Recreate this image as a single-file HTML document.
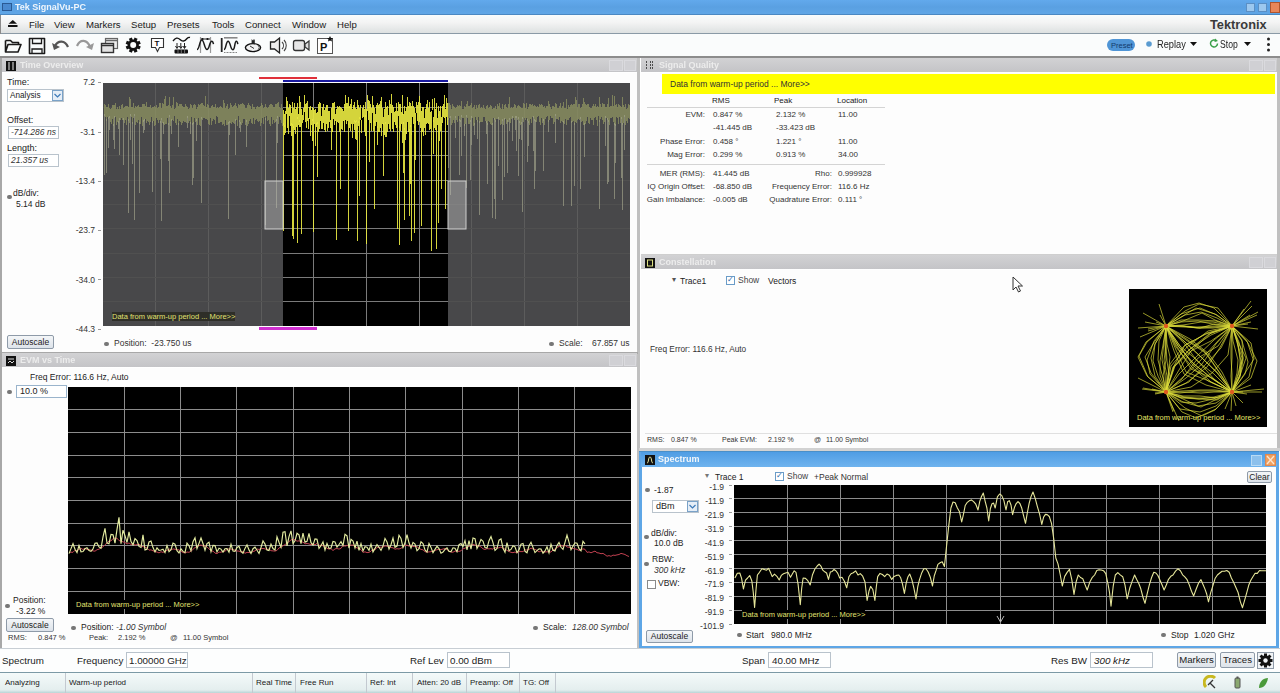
<!DOCTYPE html><html><head><meta charset="utf-8"><style>
*{margin:0;padding:0;box-sizing:border-box}
body{width:1280px;height:693px;overflow:hidden;background:#fff;font-family:"Liberation Sans", sans-serif;position:relative}
.t{position:absolute;white-space:nowrap;line-height:1.2}
.r{position:absolute}
svg{position:absolute}
</style></head><body><div class="r" style="left:0px;top:0px;width:1280px;height:15px;background:linear-gradient(#62a9ec,#5aa0e2 50%,#5fa6e6);border-bottom:1px solid #4a88c2"></div>
<div class="t" style="left:15px;top:2.1px;font-size:9px;color:#fff;font-weight:bold;opacity:.9">Tek SignalVu-PC</div>
<div class="r" style="left:2px;top:3px;width:10px;height:8px;border:1.5px solid #2a5a94;background:#4a8ad0"></div>
<div class="r" style="left:1246px;top:3px;width:9px;height:9px;background:#9cc8ef;border:1px solid #5b8fc4"></div>
<div class="r" style="left:1258px;top:3px;width:9px;height:9px;background:#9cc8ef;border:1px solid #5b8fc4"></div>
<div class="r" style="left:1270px;top:2px;width:10px;height:11px;background:#e8865a;border:1px solid #b0552e"></div>
<div class="r" style="left:0px;top:15px;width:1280px;height:19px;background:linear-gradient(#f8fcfc,#f4f4f4 40%,#dde1e1);border-bottom:1px solid #8a9aa6"></div>
<svg style="left:7px;top:19px" width="12" height="9"><path d="M1.5 4.8L5.8 1 10 4.8z" fill="#111"/><rect x="1" y="6" width="9.5" height="2" fill="#111"/></svg>
<div class="r" style="left:0px;top:15px;width:1px;height:19px;background:#8a8a8a"></div>
<div class="t" style="left:29px;top:18.7px;font-size:9.6px;color:#1a1a1a;">File</div>
<div class="t" style="left:54px;top:18.7px;font-size:9.6px;color:#1a1a1a;">View</div>
<div class="t" style="left:86px;top:18.7px;font-size:9.6px;color:#1a1a1a;">Markers</div>
<div class="t" style="left:131px;top:18.7px;font-size:9.6px;color:#1a1a1a;">Setup</div>
<div class="t" style="left:167px;top:18.7px;font-size:9.6px;color:#1a1a1a;">Presets</div>
<div class="t" style="left:212px;top:18.7px;font-size:9.6px;color:#1a1a1a;">Tools</div>
<div class="t" style="left:245px;top:18.7px;font-size:9.6px;color:#1a1a1a;">Connect</div>
<div class="t" style="left:292px;top:18.7px;font-size:9.6px;color:#1a1a1a;">Window</div>
<div class="t" style="left:337px;top:18.7px;font-size:9.6px;color:#1a1a1a;">Help</div>
<div class="t" style="left:1210px;top:17px;font-size:12.8px;font-weight:bold;color:#3a3a3a">Tektronix</div>
<div class="r" style="left:0px;top:34px;width:1280px;height:22px;background:#fafcfc"></div>
<div class="r" style="left:0px;top:56px;width:1280px;height:2px;background:#8c8c8c"></div>
<svg style="left:0;top:33px" width="1280" height="23" viewBox="0 33 1280 23"><path d="M5.5 40.5h5l2 2h6v2M5.5 40.5v11.5h12.5l3-7.5h-13l-2.5 7.5" stroke="#1a1a1a" stroke-width="1.6" fill="none" stroke-linejoin="round"/><path d="M29.5 38.5h15v15h-15z" stroke="#1a1a1a" stroke-width="1.6" fill="none" stroke-linejoin="round"/><path d="M32.5 38.5v5h9v-5M32 53v-4h10v4" stroke="#1a1a1a" stroke-width="1.3" fill="none"/><path d="M68 47c-3-7-10-7-13-1" stroke="#555" stroke-width="2.2" fill="none"/><path d="M52 43l2 7 6-3z" fill="#555"/><path d="M77 46c3-7 10-7 13 1" stroke="#999" stroke-width="2.2" fill="none"/><path d="M94 43l-2 7-6-3z" fill="#999"/><rect x="105.5" y="38.5" width="12" height="10" stroke="#666" stroke-width="1.2" fill="#eee"/><path d="M105.5 40.5h12" stroke="#666" stroke-width="1.5"/><rect x="101.5" y="43.5" width="12" height="9" stroke="#333" stroke-width="1.4" fill="#e2e2e2"/><path d="M101.5 45.5h12" stroke="#333" stroke-width="1.5"/><circle cx="133.2" cy="45.1" r="5.6" fill="#111"/><rect x="131.6" y="37.6" width="3.2" height="3.2" fill="#111" transform="rotate(22.5 133.2 45.1)"/><rect x="131.6" y="37.6" width="3.2" height="3.2" fill="#111" transform="rotate(67.5 133.2 45.1)"/><rect x="131.6" y="37.6" width="3.2" height="3.2" fill="#111" transform="rotate(112.5 133.2 45.1)"/><rect x="131.6" y="37.6" width="3.2" height="3.2" fill="#111" transform="rotate(157.5 133.2 45.1)"/><rect x="131.6" y="37.6" width="3.2" height="3.2" fill="#111" transform="rotate(202.5 133.2 45.1)"/><rect x="131.6" y="37.6" width="3.2" height="3.2" fill="#111" transform="rotate(247.5 133.2 45.1)"/><rect x="131.6" y="37.6" width="3.2" height="3.2" fill="#111" transform="rotate(292.5 133.2 45.1)"/><rect x="131.6" y="37.6" width="3.2" height="3.2" fill="#111" transform="rotate(337.5 133.2 45.1)"/><circle cx="133.2" cy="45.1" r="3" fill="#fafcfc"/><path d="M151.5 38.5h12v9h-4l-2 4-2-4h-4z" stroke="#333" stroke-width="1.1" fill="#fff"/><text x="154.6" y="46.2" font-size="8" font-weight="bold" font-family="Liberation Sans" fill="#111">T</text><path d="M173 41c2.5-3 4.5-4 7-1.5s4.5 2 7-1c1-1 2-1.3 3-1" stroke="#111" stroke-width="1.4" fill="none"/><path d="M177 43v5M180.8 43v5M184.5 43v5" stroke="#222" stroke-width="1"/><path d="M175.5 46l1.5 2.5 1.5-2.5M179.3 46l1.5 2.5 1.5-2.5M183 46l1.5 2.5 1.5-2.5" stroke="#222" stroke-width="1" fill="none"/><rect x="174.5" y="49.5" width="13.5" height="4" rx="1" fill="#111"/><path d="M178 50v3M181.3 50v3M184.6 50v3" stroke="#888" stroke-width=".8"/><path d="M200.5 37v16M210.5 37v16" stroke="#999" stroke-width="1.2"/><path d="M201 39h9" stroke="#222" stroke-width="1"/><circle cx="202.5" cy="39" r="1.1" fill="#111"/><circle cx="207.5" cy="39" r="1.1" fill="#111"/><path d="M197 49.5c2.5 0 2.5-9.5 4.8-9.5s2.8 9.5 5.2 9.5 2.5-8.3 4.7-8.3c1 0 1.5 1.5 1.8 2.9" stroke="#1a1a1a" stroke-width="1.5" fill="none"/><path d="M221.7 38v14" stroke="#222" stroke-width="1.8"/><path d="M224 37.8h13.5" stroke="#888" stroke-width="1.6"/><path d="M224 49.5c2.2 0 1.8-8.3 4.1-8.3s2.3 8.5 4.7 8.5 1.6-8.5 3.5-8.5c1 0 1.3 1.5 1.5 2.9" stroke="#1a1a1a" stroke-width="1.5" fill="none"/><path d="M224 52.5h13" stroke="#666" stroke-width=".8" stroke-dasharray="1 .5"/><ellipse cx="253" cy="47.6" rx="7.6" ry="4" stroke="#111" stroke-width="1.4" fill="#f0f0f0"/><path d="M250 46l4 2.5" stroke="#333" stroke-width="1"/><path d="M258 45.5a4 3 0 0 1 0 4" stroke="#555" stroke-width=".8" fill="none"/><path d="M251.6 43.5v-4.5l1 1.5 .6-1.5.6 1.5 1-1.5v4.5z" fill="#222"/><path d="M270.5 42h4l5-4v15l-5-4h-4z" stroke="#222" stroke-width="1.3" fill="#eee"/><path d="M282 42c2 2 2 5 0 7M284 40c3 3 3 8 0 11" stroke="#444" stroke-width="1.1" fill="none"/><rect x="293.5" y="40.5" width="11" height="10" rx="2" stroke="#333" stroke-width="1.3" fill="#e6e6e6"/><path d="M305 44l4-3v9l-4-3z" stroke="#333" stroke-width="1.2" fill="#ddd"/><rect x="317.5" y="38.5" width="15" height="15" stroke="#555" stroke-width="1" fill="#fff"/><text x="320" y="51" font-size="11" font-weight="bold" font-family="Liberation Sans" fill="#111">P</text><path d="M330 36l1 2 2 0-1.5 1.5.5 2-2-1-2 1 .5-2-1.5-1.5 2 0z" fill="#111"/><rect x="1107" y="39" width="28" height="12" rx="6" fill="#4f95d6"/><text x="1111" y="48" font-size="7.5" font-family="Liberation Sans" fill="#123a6a">Preset</text><circle cx="1149" cy="44" r="2.8" fill="#5a9bd0"/><path d="M1190 42h7l-3.5 4z" fill="#111"/><path d="M1216.5 41a3.5 3.5 0 1 0 1 2.5" stroke="#3aa04a" stroke-width="1.5" fill="none"/><path d="M1215 38.5l3 2.5-3.5 1z" fill="#3aa04a"/><path d="M1244 42h7l-3.5 4z" fill="#111"/><circle cx="1268.5" cy="39" r="1.5" fill="#222"/><circle cx="1268.5" cy="44.5" r="1.5" fill="#222"/><circle cx="1268.5" cy="50" r="1.5" fill="#222"/></svg>
<div class="t" style="left:1157px;top:38.2px;font-size:10.5px;color:#222;transform:scaleX(.88);transform-origin:0 0">Replay</div>
<div class="t" style="left:1220px;top:38.2px;font-size:10.5px;color:#222;transform:scaleX(.82);transform-origin:0 0">Stop</div>
<div class="r" style="left:0px;top:58px;width:2px;height:590px;background:#a8a8a8"></div>
<div class="r" style="left:637px;top:58px;width:3px;height:590px;background:#c0c0c0"></div>
<div class="r" style="left:1277px;top:58px;width:3px;height:392px;background:#c0c0c0"></div>
<div class="r" style="left:2px;top:58px;width:635px;height:14px;background:linear-gradient(#d2d2d4,#c4c4c7)"></div>
<div class="t" style="left:20px;top:60.1px;font-size:9px;color:#ececec;font-weight:bold;filter:blur(0.6px)">Time Overview</div>
<div class="r" style="left:609px;top:60px;width:14px;height:11px;background:#d0d0d4;border:1px solid #dadade"></div>
<div class="r" style="left:624px;top:60px;width:12px;height:11px;background:#d0d0d4;border:1px solid #dadade"></div>
<div class="r" style="left:6px;top:61px;width:10px;height:10px;background:#111"></div>
<svg style="left:6px;top:61px" width="10" height="10"><path d="M3 1v8M7 1v8" stroke="#bbb" stroke-width="1.3"/></svg>
<div class="r" style="left:2px;top:73px;width:635px;height:279px;background:#fdfdfd"></div>
<div class="r" style="left:0px;top:352px;width:638px;height:1.5px;background:#a8a8a8"></div>
<div class="r" style="left:2px;top:353px;width:635px;height:14px;background:linear-gradient(#d2d2d4,#c4c4c7)"></div>
<div class="t" style="left:20px;top:355.1px;font-size:9px;color:#ececec;font-weight:bold;filter:blur(0.6px)">EVM vs Time</div>
<div class="r" style="left:609px;top:355px;width:14px;height:11px;background:#d0d0d4;border:1px solid #dadade"></div>
<div class="r" style="left:624px;top:355px;width:12px;height:11px;background:#d0d0d4;border:1px solid #dadade"></div>
<div class="r" style="left:6px;top:356px;width:10px;height:10px;background:#111"></div>
<svg style="left:6px;top:356px" width="10" height="10"><path d="M2 3h6M2 7l2-2 2 2 2-2" stroke="#ddd" stroke-width="1"/></svg>
<div class="r" style="left:2px;top:368px;width:635px;height:277px;background:#fdfdfd"></div>
<div class="r" style="left:641px;top:58px;width:636px;height:14px;background:linear-gradient(#d2d2d4,#c4c4c7)"></div>
<div class="t" style="left:659px;top:60.1px;font-size:9px;color:#ececec;font-weight:bold;filter:blur(0.6px)">Signal Quality</div>
<div class="r" style="left:1249px;top:60px;width:14px;height:11px;background:#d0d0d4;border:1px solid #dadade"></div>
<div class="r" style="left:1264px;top:60px;width:12px;height:11px;background:#d0d0d4;border:1px solid #dadade"></div>
<svg style="left:645px;top:60px" width="10" height="11"><path d="M1 2h2M5 2h3M1 5h2M5 5h3M1 8h2M5 8h3" stroke="#222" stroke-width="1.5" stroke-dasharray="1 1"/></svg>
<div class="r" style="left:641px;top:73px;width:636px;height:181px;background:#fdfdfd"></div>
<div class="r" style="left:641px;top:254px;width:636px;height:1px;background:#cfcfcf"></div>
<div class="r" style="left:641px;top:255px;width:636px;height:14px;background:linear-gradient(#d2d2d4,#c4c4c7)"></div>
<div class="t" style="left:659px;top:257.1px;font-size:9px;color:#ececec;font-weight:bold;filter:blur(0.6px)">Constellation</div>
<div class="r" style="left:1249px;top:257px;width:14px;height:11px;background:#d0d0d4;border:1px solid #dadade"></div>
<div class="r" style="left:1264px;top:257px;width:12px;height:11px;background:#d0d0d4;border:1px solid #dadade"></div>
<div class="r" style="left:645px;top:258px;width:10px;height:10px;background:#111"></div>
<svg style="left:645px;top:258px" width="10" height="10"><rect x="2.5" y="2" width="5" height="6" stroke="#dde080" fill="none"/></svg>
<div class="r" style="left:641px;top:270px;width:636px;height:179px;background:#fdfdfd"></div>
<div class="r" style="left:639px;top:448px;width:641px;height:3px;background:#d2d2d2"></div>
<div class="r" style="left:639px;top:451px;width:640px;height:197px;background:linear-gradient(#4a8fc8 0,#4a8fc8 1px,#5ea6e6 1px)"></div>
<div class="r" style="left:641px;top:452px;width:636px;height:15px;background:linear-gradient(#4f9de4,#6fb3ee)"></div>
<div class="t" style="left:658px;top:454.1px;font-size:9px;color:#f4f8fc;font-weight:bold;filter:blur(0.3px)">Spectrum</div>
<div class="r" style="left:1251px;top:455px;width:11px;height:11px;background:#8cc0ec;border:1px solid #b8daf4"></div>
<div class="r" style="left:1265px;top:454px;width:11px;height:12px;background:#f0a060;border:1px solid #e08850"></div>
<svg style="left:1265px;top:454px" width="11" height="12"><path d="M2 2l7 8M9 2l-7 8" stroke="#fde6d0" stroke-width="1.3"/></svg>
<div class="r" style="left:645px;top:455px;width:10px;height:10px;background:#111"></div>
<svg style="left:645px;top:455px" width="10" height="10"><path d="M2 8c2 0 1-6 3-6s1 6 3 6" stroke="#e8e8a0" stroke-width="1" fill="none"/></svg>
<div class="r" style="left:642px;top:467px;width:634px;height:179px;background:#fdfdfd"></div>
<svg style="left:0;top:0" width="1280" height="693" viewBox="0 0 1280 693"><rect x="103" y="83" width="527" height="243" fill="#48484a"/><rect x="283" y="83" width="165" height="243" fill="#000"/><path d="M155.5 83V326M208.5 83V326M261.5 83V326M313.5 83V326M366.5 83V326M419.5 83V326M471.5 83V326M524.5 83V326M577.5 83V326" stroke="#5c5c5c" stroke-width="1" fill="none"/><path d="M103 107.5H630M103 131.5H630M103 155.5H630M103 180.5H630M103 204.5H630M103 228.5H630M103 253.5H630M103 277.5H630M103 301.5H630" stroke="#505050" stroke-width="1" fill="none"/><path d="M313.5 83V326M366.5 83V326M419.5 83V326M283 107.5H448M283 131.5H448M283 155.5H448M283 180.5H448M283 204.5H448M283 228.5H448M283 253.5H448M283 277.5H448M283 301.5H448" stroke="#7a7a7a" stroke-width="1"/><path d="M104.5 104V116M105.5 105V117M106.5 107V121M107.5 107V117M108.5 104V119M109.5 108V118M110.5 109V122M111.5 108V124M112.5 105V119M113.5 105V126M114.5 105V118M115.5 103V117M116.5 109V125M117.5 107V122M118.5 109V123M119.5 106V120M120.5 109V120M121.5 105V118M122.5 104V120M123.5 108V120M124.5 107V123M125.5 106V120M126.5 106V125M127.5 106V117M128.5 107V121M129.5 97V123M130.5 99V116M131.5 107V117M132.5 107V124M133.5 103V118M134.5 108V116M135.5 106V125M136.5 107V122M137.5 106V123M138.5 105V120M139.5 107V124M140.5 107V124M141.5 107V117M142.5 104V126M143.5 104V122M144.5 104V121M145.5 106V119M146.5 102V123M147.5 107V121M148.5 107V122M149.5 107V125M150.5 105V122M151.5 108V117M152.5 107V123M153.5 107V121M154.5 106V126M155.5 107V125M156.5 105V118M157.5 108V120M158.5 107V123M159.5 103V120M160.5 103V123M161.5 108V120M162.5 103V123M163.5 104V124M164.5 99V125M165.5 96V124M166.5 106V124M167.5 106V118M168.5 105V125M169.5 97V117M170.5 106V126M171.5 108V121M172.5 105V120M173.5 97V121M174.5 109V116M175.5 108V123M176.5 102V125M177.5 103V119M178.5 106V125M179.5 104V121M180.5 104V122M181.5 104V125M182.5 106V123M183.5 107V121M184.5 107V122M185.5 104V122M186.5 106V123M187.5 107V118M188.5 109V123M189.5 108V121M190.5 104V124M191.5 105V117M192.5 108V125M193.5 105V124M194.5 104V118M195.5 105V122M196.5 109V121M197.5 107V125M198.5 104V118M199.5 105V125M200.5 104V126M201.5 103V119M202.5 103V120M203.5 105V118M204.5 106V118M205.5 96V119M206.5 107V119M207.5 104V120M208.5 105V124M209.5 108V125M210.5 108V118M211.5 106V125M212.5 105V121M213.5 107V119M214.5 107V120M215.5 104V124M216.5 108V116M217.5 107V117M218.5 108V123M219.5 107V123M220.5 106V122M221.5 107V122M222.5 108V125M223.5 100V124M224.5 103V126M225.5 108V120M226.5 106V125M227.5 104V125M228.5 109V124M229.5 108V123M230.5 103V123M231.5 105V124M232.5 107V122M233.5 106V123M234.5 105V124M235.5 103V121M236.5 106V120M237.5 108V126M238.5 104V116M239.5 105V122M240.5 104V124M241.5 104V125M242.5 103V123M243.5 104V119M244.5 105V119M245.5 108V125M246.5 108V122M247.5 105V126M248.5 103V124M249.5 105V121M250.5 106V119M251.5 109V123M252.5 104V124M253.5 107V118M254.5 107V124M255.5 109V120M256.5 107V119M257.5 106V121M258.5 107V122M259.5 107V121M260.5 106V126M261.5 103V123M262.5 105V118M263.5 108V124M264.5 107V117M265.5 104V120M266.5 107V116M267.5 108V121M268.5 107V120M269.5 105V124M270.5 104V126M271.5 104V117M272.5 105V124M273.5 107V120M274.5 107V123M275.5 104V122M276.5 104V121M277.5 103V118M278.5 102V124M279.5 107V117M280.5 108V120M281.5 104V123M282.5 108V126M448.5 103V120M449.5 103V118M450.5 105V118M451.5 109V125M452.5 104V123M453.5 106V120M454.5 107V123M455.5 108V118M456.5 107V120M457.5 105V122M458.5 106V116M459.5 105V121M460.5 106V122M461.5 101V117M462.5 109V118M463.5 109V118M464.5 106V126M465.5 107V124M466.5 104V117M467.5 101V118M468.5 106V124M469.5 106V124M470.5 105V122M471.5 103V118M472.5 108V118M473.5 107V126M474.5 105V125M475.5 109V117M476.5 105V120M477.5 108V122M478.5 105V117M479.5 104V123M480.5 108V122M481.5 107V122M482.5 108V122M483.5 105V117M484.5 108V117M485.5 109V121M486.5 106V123M487.5 105V125M488.5 108V121M489.5 107V122M490.5 105V124M491.5 106V125M492.5 109V125M493.5 108V118M494.5 108V120M495.5 106V122M496.5 109V119M497.5 104V119M498.5 106V119M499.5 103V120M500.5 108V125M501.5 109V124M502.5 104V121M503.5 109V125M504.5 105V120M505.5 104V119M506.5 107V124M507.5 108V122M508.5 104V122M509.5 97V120M510.5 108V123M511.5 107V119M512.5 108V118M513.5 107V118M514.5 104V120M515.5 105V118M516.5 108V118M517.5 106V120M518.5 105V119M519.5 106V123M520.5 107V125M521.5 108V124M522.5 108V119M523.5 103V122M524.5 104V118M525.5 108V120M526.5 103V118M527.5 109V121M528.5 107V123M529.5 104V125M530.5 104V119M531.5 105V123M532.5 104V117M533.5 106V118M534.5 105V121M535.5 106V122M536.5 107V122M537.5 106V117M538.5 107V116M539.5 104V122M540.5 105V125M541.5 104V118M542.5 105V123M543.5 107V121M544.5 106V125M545.5 108V119M546.5 106V117M547.5 106V116M548.5 101V122M549.5 104V120M550.5 107V116M551.5 109V118M552.5 106V118M553.5 106V124M554.5 107V122M555.5 103V116M556.5 104V119M557.5 108V119M558.5 108V120M559.5 106V117M560.5 103V123M561.5 108V121M562.5 106V122M563.5 102V123M564.5 108V124M565.5 108V119M566.5 99V125M567.5 109V120M568.5 105V120M569.5 107V118M570.5 105V117M571.5 104V123M572.5 105V122M573.5 104V121M574.5 104V125M575.5 97V122M576.5 100V123M577.5 107V120M578.5 104V119M579.5 104V120M580.5 108V119M581.5 107V122M582.5 104V121M583.5 98V125M584.5 102V125M585.5 104V124M586.5 105V121M587.5 104V117M588.5 104V123M589.5 107V124M590.5 108V118M591.5 108V120M592.5 106V120M593.5 104V125M594.5 106V118M595.5 104V117M596.5 107V120M597.5 106V126M598.5 107V116M599.5 97V122M600.5 104V119M601.5 107V117M602.5 103V120M603.5 104V124M604.5 104V122M605.5 107V118M606.5 107V118M607.5 104V120M608.5 98V122M609.5 107V125M610.5 106V118M611.5 106V118M612.5 95V117M613.5 106V122M614.5 96V125M615.5 105V126M616.5 104V117M617.5 107V118M618.5 104V124M619.5 105V117M620.5 106V123M621.5 107V119M622.5 97V125M623.5 105V123M624.5 107V117M625.5 104V125M626.5 109V121M627.5 108V123M628.5 104V118M629.5 105V119" stroke="#8f9462" stroke-width="1" fill="none" opacity=".75"/><path d="M104.5 114V175M106.5 119V173M108.5 117V148M109.5 116V130M113.5 124V140M114.5 116V149M118.5 121V129M119.5 118V155M123.5 118V165M128.5 119V213M130.5 114V140M132.5 122V164M134.5 114V220M139.5 122V193M143.5 120V133M144.5 119V130M152.5 121V192M160.5 121V159M161.5 118V221M163.5 122V134M168.5 123V161M169.5 115V193M171.5 119V134M178.5 123V147M187.5 116V128M190.5 122V134M192.5 123V185M193.5 122V178M196.5 119V141M201.5 117V203M228.5 122V219M229.5 121V135M235.5 119V155M239.5 120V128M240.5 122V132M246.5 120V147M265.5 118V225M276.5 119V208M277.5 116V143M448.5 118V168M450.5 116V195M455.5 116V138M459.5 119V175M460.5 120V127M461.5 115V156M464.5 124V136M466.5 115V188M470.5 120V180M471.5 116V145M474.5 123V135M477.5 120V139M479.5 121V215M486.5 121V134M487.5 123V184M492.5 123V218M494.5 118V199M495.5 120V219M498.5 117V166M502.5 119V200M504.5 118V177M507.5 120V173M509.5 118V131M512.5 116V141M515.5 116V130M516.5 116V151M518.5 117V176M519.5 121V139M521.5 122V140M522.5 117V212M527.5 119V162M528.5 121V146M533.5 116V151M534.5 119V189M535.5 120V171M543.5 119V171M548.5 120V132M555.5 114V143M563.5 121V206M571.5 121V206M574.5 123V186M580.5 117V189M584.5 123V157M599.5 120V209M605.5 116V146M607.5 118V184M608.5 120V182M614.5 123V199M615.5 124V163M621.5 117V178M622.5 123V210M624.5 115V150" stroke="#a4a68c" stroke-width="1" fill="none" opacity=".65"/><path d="M283.5 110V125M283.5 123V231M284.5 114V127M284.5 125V135M285.5 111V133M286.5 97V114M287.5 101V128M288.5 108V134M289.5 104V116M290.5 105V126M291.5 113V125M291.5 123V136M292.5 102V126M292.5 124V236M293.5 108V128M293.5 126V239M294.5 103V130M295.5 109V134M296.5 107V127M297.5 103V119M297.5 117V243M298.5 114V125M299.5 96V122M299.5 120V127M300.5 102V127M301.5 109V125M301.5 123V234M302.5 115V123M303.5 108V120M304.5 95V112M305.5 104V122M306.5 103V128M306.5 126V127M307.5 101V121M308.5 118V129M309.5 107V119M310.5 106V136M311.5 110V125M312.5 107V121M312.5 119V141M313.5 108V129M313.5 127V232M314.5 110V124M315.5 109V132M315.5 130V146M316.5 113V125M316.5 123V127M317.5 112V124M317.5 122V177M318.5 104V132M319.5 102V129M320.5 103V121M321.5 116V129M322.5 107V129M323.5 104V123M324.5 110V130M325.5 108V132M326.5 105V124M327.5 105V131M328.5 111V128M329.5 111V122M330.5 120V128M330.5 126V126M331.5 108V129M331.5 127V150M332.5 103V132M332.5 130V132M333.5 103V119M334.5 102V125M335.5 114V121M336.5 109V124M336.5 122V240M337.5 106V122M338.5 107V123M339.5 106V132M340.5 107V135M340.5 133V189M341.5 108V129M342.5 109V130M343.5 111V121M344.5 104V132M345.5 95V120M346.5 103V124M347.5 103V121M348.5 97V125M348.5 123V231M349.5 106V128M350.5 104V131M351.5 99V124M352.5 109V138M353.5 105V124M354.5 102V122M354.5 120V130M355.5 108V123M355.5 121V139M356.5 109V122M356.5 120V140M357.5 100V129M357.5 127V241M358.5 105V123M358.5 121V126M359.5 108V119M359.5 117V196M360.5 105V120M361.5 120V133M362.5 108V118M363.5 105V117M364.5 109V132M365.5 102V117M365.5 115V136M366.5 109V122M366.5 120V244M367.5 95V111M368.5 100V120M369.5 101V113M369.5 111V162M370.5 104V123M371.5 108V131M372.5 96V113M373.5 105V131M373.5 129V128M374.5 108V123M374.5 121V209M375.5 114V126M376.5 105V122M377.5 103V128M377.5 126V145M378.5 105V132M379.5 104V132M380.5 101V128M381.5 97V107M381.5 105V136M382.5 108V124M383.5 117V125M383.5 123V176M384.5 109V135M385.5 102V124M385.5 122V137M386.5 107V137M387.5 106V132M388.5 115V124M389.5 100V129M390.5 104V131M391.5 94V113M392.5 105V129M393.5 107V132M394.5 112V122M395.5 111V125M396.5 103V128M397.5 111V127M397.5 125V229M398.5 102V116M399.5 104V128M399.5 126V245M400.5 104V126M400.5 124V131M401.5 112V124M402.5 95V115M402.5 113V143M403.5 114V124M403.5 122V173M404.5 106V130M404.5 128V220M405.5 111V140M406.5 107V134M406.5 132V134M407.5 97V122M408.5 106V132M409.5 102V131M409.5 129V216M410.5 103V127M410.5 125V184M411.5 106V135M411.5 133V241M412.5 101V117M413.5 106V124M414.5 108V128M414.5 126V233M415.5 113V123M415.5 121V160M416.5 102V113M417.5 105V121M418.5 102V125M419.5 96V122M420.5 103V128M421.5 111V132M421.5 130V226M422.5 107V132M423.5 107V136M424.5 118V128M425.5 109V135M426.5 104V124M427.5 100V123M428.5 108V124M429.5 102V130M430.5 112V129M431.5 111V140M431.5 138V251M432.5 99V110M433.5 117V122M433.5 120V154M434.5 98V128M435.5 109V130M436.5 103V130M436.5 128V249M437.5 118V125M438.5 106V116M438.5 114V223M439.5 111V141M440.5 106V131M441.5 117V126M441.5 124V189M442.5 106V123M443.5 104V117M444.5 95V118M445.5 109V130M445.5 128V209M446.5 98V117M447.5 103V125" stroke="#e6e640" stroke-width="1" fill="none" opacity=".92"/><rect x="265" y="181" width="18" height="48" fill="#bdbdbd" fill-opacity=".45" stroke="#cfcfcf" stroke-width="1"/><rect x="448" y="181" width="18" height="48" fill="#bdbdbd" fill-opacity=".45" stroke="#cfcfcf" stroke-width="1"/><rect x="259" y="77" width="58" height="2" fill="#e0303a"/><rect x="283" y="80" width="165" height="2" fill="#1a1aa0"/><rect x="259" y="327" width="58" height="3" fill="#d030d0"/><rect x="68" y="387" width="563" height="227" fill="#000"/><path d="M124.5 387V614M180.5 387V614M236.5 387V614M293.5 387V614M349.5 387V614M405.5 387V614M462.5 387V614M518.5 387V614M574.5 387V614M68 409.5H631M68 432.5H631M68 455.5H631M68 477.5H631M68 500.5H631M68 523.5H631M68 545.5H631M68 568.5H631M68 591.5H631" stroke="#8c8c8c" stroke-width="1" fill="none"/><polyline points="69,552.5 71,552.2 73,552.3 75,550.2 77,550.8 79,549.3 81,548.3 83,549.5 85,548.1 87,549.6 89,549.5 91,550.2 93,550.9 95,551.2 97,549.7 99,549.2 101,547.8 103,546.9 105,544.7 107,543.1 109,541.0 111,541.0 113,538.5 115,538.1 117,538.2 119,540.6 121,541.0 123,541.9 125,542.5 127,544.0 129,542.9 131,544.5 133,543.7 135,545.1 137,544.6 139,544.1 141,545.8 143,546.6 145,547.2 147,548.2 149,550.2 151,549.8 153,550.8 155,551.6 157,552.0 159,552.9 161,551.7 163,552.4 165,551.3 167,550.4 169,548.9 171,549.9 173,548.9 175,549.3 177,549.8 179,549.8 181,551.3 183,552.5 185,553.0 187,552.0 189,552.3 191,551.2 193,549.4 195,547.5 197,546.6 199,545.6 201,545.0 203,546.1 205,545.8 207,546.9 209,548.9 211,550.9 213,551.1 215,553.1 217,553.7 219,552.0 221,552.3 223,551.2 225,551.2 227,549.5 229,548.8 231,549.1 233,549.6 235,550.2 237,551.0 239,551.1 241,552.1 243,551.5 245,553.3 247,552.4 249,552.5 251,552.9 253,551.5 255,550.9 257,549.0 259,549.4 261,548.8 263,548.4 265,548.9 267,549.7 269,549.0 271,550.7 273,550.9 275,551.1 277,550.4 279,547.9 281,547.4 283,545.7 285,544.6 287,543.1 289,541.6 291,539.9 293,539.3 295,539.8 297,541.2 299,540.8 301,541.7 303,542.1 305,543.8 307,543.5 309,543.9 311,544.8 313,543.6 315,544.8 317,543.4 319,545.4 321,545.2 323,545.7 325,546.7 327,548.3 329,549.1 331,548.7 333,550.5 335,548.9 337,548.5 339,549.1 341,548.4 343,545.4 345,546.2 347,545.5 349,545.7 351,545.1 353,545.1 355,546.8 357,547.9 359,548.6 361,549.6 363,552.4 365,551.8 367,552.6 369,552.4 371,551.2 373,549.2 375,549.9 377,547.4 379,547.3 381,547.2 383,547.1 385,545.9 387,546.2 389,546.3 391,547.5 393,547.8 395,549.2 397,548.7 399,549.0 401,548.3 403,546.7 405,545.5 407,545.1 409,546.2 411,544.9 413,546.6 415,546.3 417,546.6 419,548.2 421,549.4 423,549.8 425,551.7 427,552.1 429,551.9 431,551.7 433,551.0 435,550.4 437,549.7 439,549.4 441,549.6 443,549.0 445,548.5 447,549.6 449,550.9 451,552.1 453,552.2 455,551.1 457,551.0 459,551.4 461,550.8 463,548.8 465,548.2 467,547.2 469,546.3 471,545.4 473,544.4 475,545.1 477,545.9 479,546.0 481,546.9 483,548.8 485,549.5 487,548.6 489,548.9 491,548.7 493,549.2 495,547.2 497,548.2 499,547.8 501,547.0 503,548.3 505,549.1 507,550.4 509,551.5 511,552.3 513,552.7 515,552.0 517,553.0 519,551.6 521,551.6 523,551.6 525,549.8 527,550.1 529,549.4 531,548.1 533,549.0 535,549.4 537,550.4 539,552.0 541,550.9 543,551.6 545,552.0 547,551.8 549,551.8 551,552.1 553,549.9 555,549.1 557,547.6 559,546.4 561,545.3 563,546.4 565,545.2 567,547.0 569,547.2 571,547.8 573,548.5 575,548.9 577,549.4 579,550.5 581,549.5 583,548.9 585,549.3 587,552.4 589,551.9 591,552.8 593,551.9 595,551.1 597,552.7 599,553.0 601,553.7 603,553.4 605,554.7 607,556.2 609,555.6 611,556.3 613,555.1 615,555.4 617,554.9 619,554.5 621,553.4 623,553.9 625,554.5 627,555.7 629,556.5" stroke="#c04050" stroke-width="1" fill="none"/><polyline points="69,553.6 71,548.6 73,543.7 75,549.3 77,552.6 79,545.6 81,551.8 83,551.5 85,548.8 87,547.7 89,550.5 91,551.3 93,549.0 95,543.2 97,542.9 99,546.9 101,548.3 103,536.9 105,528.3 107,543.0 109,543.7 111,534.4 113,534.8 115,543.2 117,529.3 119,517.3 121,543.7 123,530.2 125,535.7 127,542.5 129,531.8 131,541.6 133,544.8 135,538.6 137,540.6 139,546.4 141,547.4 143,534.8 145,549.9 147,549.2 149,542.0 151,541.0 153,547.6 155,552.0 157,547.8 159,550.4 161,550.0 163,549.2 165,552.6 167,545.4 169,551.6 171,549.6 173,543.0 175,544.2 177,550.6 179,552.9 181,548.9 183,551.4 185,552.5 187,543.1 189,545.7 191,550.7 193,541.7 195,537.8 197,548.7 199,543.4 201,538.0 203,543.5 205,550.2 207,543.5 209,542.2 211,551.8 213,545.4 215,545.6 217,551.9 219,548.2 221,549.1 223,552.1 225,548.7 227,548.6 229,552.1 231,544.1 233,551.0 235,551.3 237,547.4 239,546.3 241,551.4 243,553.3 245,548.4 247,544.8 249,549.9 251,553.4 253,548.7 255,547.2 257,550.3 259,553.5 261,547.5 263,540.8 265,544.1 267,550.0 269,550.5 271,544.2 273,548.5 275,549.9 277,536.9 279,542.3 281,547.3 283,532.3 285,531.7 287,545.8 289,536.6 291,530.9 293,543.6 295,540.8 297,533.3 299,534.8 301,543.6 303,533.0 305,542.1 307,541.3 309,533.4 311,542.7 313,545.1 315,538.9 317,539.3 319,548.4 321,545.7 323,541.8 325,550.1 327,543.4 329,548.4 331,548.0 333,541.5 335,541.9 337,547.1 339,544.5 341,541.7 343,545.5 345,534.2 347,535.8 349,548.2 351,539.4 353,541.1 355,548.0 357,541.2 359,550.3 361,543.5 363,550.9 365,546.7 367,547.2 369,550.3 371,544.0 373,551.9 375,548.4 377,544.6 379,547.3 381,550.4 383,545.9 385,538.4 387,542.0 389,549.1 391,544.7 393,538.1 395,547.3 397,546.1 399,535.2 401,538.4 403,547.5 405,543.1 407,534.6 409,542.8 411,548.1 413,542.4 415,544.0 417,550.6 419,548.6 421,541.7 423,543.5 425,549.9 427,552.1 429,543.4 431,547.4 433,552.6 435,549.4 437,546.3 439,548.6 441,553.2 443,552.1 445,549.4 447,547.9 449,551.5 451,551.6 453,547.8 455,548.3 457,551.7 459,544.7 461,543.6 463,546.5 465,540.6 467,550.0 469,540.6 471,549.2 473,538.0 475,538.6 477,548.4 479,544.4 481,539.4 483,541.2 485,547.6 487,548.1 489,540.7 491,536.5 493,542.6 495,550.3 497,548.4 499,540.2 501,539.0 503,548.2 505,552.3 507,542.7 509,550.6 511,549.4 513,545.7 515,546.8 517,552.6 519,549.9 521,544.1 523,543.4 525,551.3 527,552.7 529,545.8 531,542.3 533,547.4 535,552.6 537,550.7 539,548.8 541,549.1 543,553.2 545,550.9 547,546.7 549,552.8 551,544.2 553,550.2 555,550.9 557,545.6 559,542.4 561,547.3 563,549.3 565,542.4 567,535.1 569,542.2 571,549.8 573,546.1 575,542.8 577,543.2 579,548.7 581,550.9 583,541.3 585,543.8" stroke="#e4eca0" stroke-width="1.15" fill="none"/><rect x="734" y="485" width="532" height="139" fill="#000"/><path d="M787.5 485V624M840.5 485V624M893.5 485V624M946.5 485V624M1000.5 485V624M1053.5 485V624M1106.5 485V624M1159.5 485V624M1212.5 485V624M734 498.5H1266M734 512.5H1266M734 526.5H1266M734 540.5H1266M734 554.5H1266M734 568.5H1266M734 582.5H1266M734 596.5H1266M734 610.5H1266" stroke="#8c8c8c" stroke-width="1" fill="none"/><polyline points="734.9,578.0 737.3,573.3 739.8,573.0 741.6,578.4 743.4,589.0 745.5,580.2 747.6,578.0 749.7,575.5 751.8,580.8 753.2,591.7 754.6,607.5 756.0,589.7 757.4,575.0 759.5,572.3 761.9,568.8 764.2,569.4 766.6,570.2 768.5,568.3 770.3,572.0 772.2,576.6 774.5,574.2 776.9,576.3 779.2,580.0 781.3,575.4 783.5,573.8 785.6,573.0 788.0,572.2 790.5,577.3 792.3,574.1 794.2,570.8 796.0,572.3 798.1,584.4 800.3,604.7 801.7,588.2 803.1,578.0 805.5,578.4 807.8,580.7 810.2,585.0 812.5,574.7 814.9,569.0 817.2,566.0 819.1,564.1 820.9,566.1 822.8,570.2 824.7,571.8 826.6,573.0 828.5,579.4 830.3,572.1 832.2,571.4 834.0,569.5 835.9,570.8 837.8,573.4 839.7,578.0 842.0,577.3 844.4,581.2 846.7,587.8 848.9,576.8 851.0,573.8 853.3,572.8 855.7,570.9 858.0,575.0 860.3,573.6 862.7,576.2 865.0,582.0 867.1,600.5 868.9,591.3 870.6,586.4 872.8,589.5 874.9,600.5 876.3,587.0 877.7,576.6 880.0,573.4 882.4,574.5 884.7,576.6 887.0,574.0 889.4,575.2 891.7,579.4 894.1,576.4 896.4,575.4 898.8,575.0 900.7,577.8 902.5,584.2 904.4,593.4 906.2,583.0 907.9,577.0 909.7,574.0 911.8,579.4 913.9,588.1 916.0,599.0 917.8,586.5 919.5,579.6 921.7,572.9 923.8,568.7 926.0,568.7 928.2,572.0 930.3,577.2 932.5,586.0 934.3,575.7 936.1,570.4 937.9,564.4 940.1,562.8 942.2,561.8 944.4,566.6 946.6,545.8 948.7,526.3 950.9,508.0 953.0,502.0 955.2,502.7 957.4,508.0 959.5,511.8 961.7,522.0 963.5,514.2 965.2,505.5 967.0,502.7 969.2,500.8 971.4,499.9 973.6,501.6 975.8,504.2 978.0,510.0 979.8,501.1 981.5,496.5 983.3,493.0 985.1,501.1 986.9,508.0 988.7,521.0 990.4,508.5 992.0,503.8 993.6,503.1 995.2,508.0 997.4,496.9 999.6,494.0 1001.7,495.4 1003.9,500.6 1006.0,510.0 1007.6,501.8 1009.3,500.6 1011.0,505.0 1012.6,514.6 1014.4,507.6 1016.2,503.6 1018.0,501.6 1019.9,503.5 1021.8,508.3 1023.6,515.9 1025.5,523.3 1027.4,512.3 1029.2,503.2 1031.1,496.4 1033.0,492.0 1035.2,498.4 1037.4,506.6 1039.6,514.2 1041.8,524.4 1043.6,517.1 1045.4,514.4 1047.2,514.6 1049.3,516.5 1051.5,523.3 1053.7,538.5 1055.8,558.0 1058.0,563.9 1060.1,574.0 1062.3,586.0 1064.7,576.4 1067.1,572.4 1069.5,569.3 1071.8,579.6 1074.0,594.4 1076.2,581.7 1078.3,575.0 1080.5,577.5 1082.8,578.7 1085.0,584.6 1087.2,590.0 1089.7,582.3 1092.1,577.7 1094.6,575.0 1096.8,570.5 1099.0,569.7 1101.3,570.0 1103.5,570.7 1105.8,573.6 1108.0,584.0 1109.5,592.3 1111.0,606.2 1113.2,586.2 1115.3,575.0 1117.8,572.7 1120.2,574.9 1122.7,576.7 1125.0,585.2 1127.2,598.8 1129.7,588.3 1132.1,581.4 1134.6,575.0 1136.7,579.5 1138.8,583.5 1140.8,588.8 1142.9,597.0 1145.0,603.3 1147.2,593.6 1149.4,584.7 1151.6,577.5 1153.8,572.2 1155.9,573.0 1157.9,575.5 1160.0,580.3 1162.0,584.8 1164.1,590.0 1166.3,585.0 1168.5,579.3 1170.8,576.3 1173.0,575.0 1175.5,571.1 1177.9,568.8 1180.4,570.7 1182.6,574.8 1184.8,576.9 1187.1,579.7 1189.3,584.9 1191.5,591.2 1193.7,595.9 1196.1,589.2 1198.6,583.0 1201.0,579.6 1202.9,584.2 1204.8,588.6 1206.6,593.7 1208.5,601.8 1210.7,592.7 1213.0,585.3 1215.2,578.2 1217.4,575.0 1219.8,573.0 1222.1,571.2 1224.5,571.3 1226.8,570.5 1229.2,572.2 1231.4,578.0 1233.6,582.2 1235.8,587.2 1238.1,592.5 1240.3,601.6 1242.5,607.7 1244.6,600.3 1246.7,592.8 1248.7,585.3 1250.8,580.2 1252.9,576.7 1255.1,573.3 1257.3,573.4 1259.5,570.5 1261.6,570.7 1263.8,570.8 1266,570.7" stroke="#e6e69a" stroke-width="1.1" fill="none" stroke-linejoin="round"/><rect x="1129" y="289" width="138" height="138" fill="#000"/><path d="M1232 326L1208 331L1187 347L1171 366L1166 392M1166 326L1180 346L1198 361L1214 379L1232 392M1232 326L1216 344L1202 364L1186 378L1166 392M1166 326L1180 346L1192 364L1211 382L1232 392M1232 326L1221 348L1206 364L1189 382L1166 392M1166 326L1190 339L1208 353L1222 372L1232 392M1232 326L1209 334L1189 350L1175 366L1166 392M1166 326L1186 343L1203 359L1218 374L1232 392M1232 326L1211 333L1192 350L1174 367L1166 392M1166 326L1185 338L1204 351L1219 372L1232 392M1232 326L1207 333L1184 346L1170 364L1166 392M1166 326L1184 343L1197 361L1214 374L1232 392M1232 326L1215 344L1200 361L1183 377L1166 392M1166 326L1179 347L1194 364L1211 378L1232 392M1232 326L1206 334L1185 345L1174 366L1166 392M1166 326L1184 341L1201 357L1217 372L1232 392M1232 326L1214 340L1196 357L1179 374L1166 392M1166 326L1174 351L1184 374L1206 385L1232 392M1232 326L1211 341L1191 351L1179 370L1166 392M1166 326L1176 345L1191 369L1212 378L1232 392M1232 326L1228 355L1212 373L1191 387L1166 392M1166 326L1186 340L1207 354L1220 373L1232 392M1232 326L1218 346L1198 358L1182 379L1166 392M1166 326L1178 346L1194 364L1213 379L1232 392M1232 326L1219 349L1207 367L1186 383L1166 392M1166 326L1176 350L1186 372L1209 381L1232 392M1232 326L1211 335L1190 349L1173 367L1166 392M1166 326L1176 347L1192 367L1208 381L1232 392M1166 326L1183 326L1197 328L1213 328L1232 326M1166 326L1181 326L1200 328L1214 324L1232 326M1166 326L1181 320L1199 320L1216 321L1232 326M1166 326L1184 327L1200 328L1214 327L1232 326M1166 326L1181 322L1198 321L1217 325L1232 326M1166 326L1183 325L1201 322L1213 322L1232 326M1166 326L1183 326L1197 327L1215 326L1232 326M1166 326L1184 307L1199 303L1214 308L1232 326M1166 326L1185 311L1199 304L1218 308L1232 326M1166 326L1183 321L1202 313L1215 320L1232 326M1166 326L1181 314L1200 308L1217 315L1232 326M1166 326L1181 317L1196 308L1215 314L1232 326M1166 326L1185 315L1201 312L1217 318L1232 326M1166 392L1180 393L1197 391L1213 391L1232 392M1166 392L1184 397L1197 398L1215 398L1232 392M1166 392L1182 398L1199 399L1214 397L1232 392M1166 392L1183 392L1201 393L1214 392L1232 392M1166 392L1180 397L1199 399L1217 400L1232 392M1166 392L1182 391L1200 390L1215 390L1232 392M1166 392L1183 396L1200 396L1218 398L1232 392M1166 392L1183 402L1201 407L1215 400L1232 392M1166 392L1183 399L1198 406L1216 403L1232 392M1166 392L1181 402L1196 403L1213 399L1232 392M1166 392L1182 412L1196 418L1216 409L1232 392M1166 392L1180 409L1200 412L1216 406L1232 392M1166 392L1185 408L1202 416L1215 410L1232 392M1166 326L1163 345L1160 361L1160 375L1166 392M1166 326L1166 345L1167 361L1169 375L1166 392M1166 326L1164 342L1162 360L1165 374L1166 392M1166 326L1166 344L1164 361L1167 376L1166 392M1166 326L1167 344L1170 357L1168 375L1166 392M1166 326L1159 341L1158 360L1163 378L1166 392M1166 326L1165 345L1166 360L1163 376L1166 392M1166 326L1154 341L1147 360L1150 374L1166 392M1166 326L1147 342L1139 356L1148 377L1166 392M1166 326L1155 344L1151 358L1155 376L1166 392M1166 326L1146 342L1138 357L1147 376L1166 392M1166 326L1153 344L1145 357L1151 373L1166 392M1166 326L1155 344L1153 361L1158 376L1166 392M1232 326L1239 342L1243 358L1238 376L1232 392M1232 326L1233 341L1238 360L1237 373L1232 392M1232 326L1231 344L1231 358L1232 374L1232 392M1232 326L1232 342L1232 358L1231 376L1232 392M1232 326L1238 343L1240 360L1240 375L1232 392M1232 326L1237 342L1241 361L1238 374L1232 392M1232 326L1237 342L1242 358L1240 375L1232 392M1232 326L1242 340L1243 360L1240 377L1232 392M1232 326L1242 341L1248 362L1245 374L1232 392M1232 326L1247 341L1253 359L1249 377L1232 392M1232 326L1239 344L1246 358L1239 378L1232 392M1232 326L1248 343L1257 361L1251 378L1232 392M1232 326L1251 343L1254 359L1245 373L1232 392M1166 326L1148 329M1166 326L1140 337M1166 326L1156 322M1166 326L1138 328M1166 326L1145 322M1166 326L1160 315M1166 326L1143 313M1166 326L1148 331M1166 326L1159 304M1232 326L1251 322M1232 326L1251 301M1232 326L1252 306M1232 326L1258 329M1232 326L1244 309M1232 326L1248 324M1232 326L1250 315M1232 326L1258 312M1232 326L1257 315M1166 392L1152 389M1166 392L1173 412M1166 392L1142 389M1166 392L1143 388M1166 392L1155 394M1166 392L1155 393M1166 392L1174 411M1166 392L1138 378M1166 392L1179 421M1232 392L1243 392M1232 392L1264 389M1232 392L1262 392M1232 392L1231 411M1232 392L1247 394M1232 392L1225 409M1232 392L1236 406M1232 392L1251 385M1232 392L1243 403" stroke="#dede3a" stroke-width=".75" fill="none" opacity=".9"/><circle cx="1166" cy="326" r="2.2" fill="#e05a20"/><circle cx="1232" cy="326" r="2.2" fill="#e05a20"/><circle cx="1166" cy="392" r="2.2" fill="#e05a20"/><circle cx="1232" cy="392" r="2.2" fill="#e05a20"/></svg>
<div class="r" style="left:0px;top:648px;width:1280px;height:24px;background:#fdfefe;border-top:1px solid #c8ced4"></div>
<div class="r" style="left:0px;top:672px;width:1280px;height:21px;background:linear-gradient(#f4fafa,#e4eeee 85%,#b8d4d6);border-top:1px solid #7c9aa6"></div>
<div class="t" style="left:7px;top:76.6px;font-size:9px;color:#222;">Time:</div>
<div class="r" style="left:7px;top:89px;width:57px;height:13px;background:#fff;border:1px solid #b9c3cc;"></div>
<div class="t" style="left:10px;top:90.6px;font-size:8.2px;color:#222;">Analysis</div>
<div class="r" style="left:52px;top:90px;width:11px;height:11px;background:#e6eef7;border:1px solid #7aa2c8"></div>
<div class="t" style="left:7px;top:114.6px;font-size:9px;color:#222;">Offset:</div>
<div class="r" style="left:8px;top:126px;width:51px;height:13px;background:#fff;border:1px solid #b9c3cc;"></div>
<div class="t" style="left:11px;top:127.4px;font-size:8.5px;color:#333;font-style:italic">-714.286 ns</div>
<div class="t" style="left:7px;top:142.6px;font-size:9px;color:#222;">Length:</div>
<div class="r" style="left:8px;top:154px;width:51px;height:13px;background:#fff;border:1px solid #b9c3cc;"></div>
<div class="t" style="left:11px;top:155.4px;font-size:8.5px;color:#333;font-style:italic">21.357 us</div>
<div class="r" style="left:7px;top:195px;width:5px;height:4px;border-radius:2px;background:#777"></div>
<div class="t" style="left:13px;top:188.4px;font-size:8.5px;color:#222;">dB/div:</div>
<div class="t" style="left:16px;top:198.9px;font-size:8.5px;color:#222;">5.14 dB</div>
<div class="t" style="right:1185px;top:77.4px;font-size:8.5px;color:#333;">7.2</div>
<div class="r" style="left:98px;top:82px;width:3px;height:1px;background:#999"></div>
<div class="t" style="right:1185px;top:126.9px;font-size:8.5px;color:#333;">-3.1</div>
<div class="r" style="left:98px;top:132px;width:3px;height:1px;background:#999"></div>
<div class="t" style="right:1185px;top:176.2px;font-size:8.5px;color:#333;">-13.4</div>
<div class="r" style="left:98px;top:181px;width:3px;height:1px;background:#999"></div>
<div class="t" style="right:1185px;top:225.3px;font-size:8.5px;color:#333;">-23.7</div>
<div class="r" style="left:98px;top:230px;width:3px;height:1px;background:#999"></div>
<div class="t" style="right:1185px;top:274.7px;font-size:8.5px;color:#333;">-34.0</div>
<div class="r" style="left:98px;top:279px;width:3px;height:1px;background:#999"></div>
<div class="t" style="right:1185px;top:324.1px;font-size:8.5px;color:#333;">-44.3</div>
<div class="r" style="left:98px;top:329px;width:3px;height:1px;background:#999"></div>
<div class="t" style="left:112px;top:312.0px;font-size:7.5px;color:#e0e070;background:#2e2e28">Data from warm-up period ... More&gt;&gt;</div>
<div class="r" style="left:7px;top:335px;width:47px;height:14px;background:linear-gradient(#f4f6f8,#dde3ea);border:1px solid #8e9aa8;border-radius:2px"></div>
<div class="t" style="left:7px;top:335px;width:47px;height:14px;line-height:14px;text-align:center;font-size:8.5px;color:#222">Autoscale</div>
<div class="r" style="left:104px;top:342px;width:5px;height:4px;border-radius:2px;background:#777"></div>
<div class="t" style="left:114px;top:338.4px;font-size:8.5px;color:#333;">Position:&nbsp;&nbsp;-23.750 us</div>
<div class="r" style="left:549px;top:342px;width:5px;height:4px;border-radius:2px;background:#777"></div>
<div class="t" style="left:559px;top:338.4px;font-size:8.5px;color:#333;">Scale:&nbsp;&nbsp;&nbsp;&nbsp;67.857 us</div>
<div class="t" style="left:30px;top:372.2px;font-size:8.5px;color:#222;">Freq Error: 116.6 Hz, Auto</div>
<div class="r" style="left:7px;top:390px;width:5px;height:4px;border-radius:2px;background:#777"></div>
<div class="r" style="left:16px;top:385px;width:51px;height:13px;background:#fff;border:1px solid #b9c3cc;border-color:#9ab4cc"></div>
<div class="t" style="left:20px;top:386.1px;font-size:9px;color:#222;">10.0 %</div>
<div class="t" style="left:76px;top:600.0px;font-size:7.5px;color:#e0e070;background:#000">Data from warm-up period ... More&gt;&gt;</div>
<div class="t" style="left:13px;top:594.9px;font-size:8.5px;color:#222;">Position:</div>
<div class="t" style="left:16px;top:605.9px;font-size:8.5px;color:#222;">-3.22 %</div>
<div class="r" style="left:5px;top:604px;width:5px;height:4px;border-radius:2px;background:#777"></div>
<div class="r" style="left:6px;top:618px;width:48px;height:14px;background:linear-gradient(#f4f6f8,#dde3ea);border:1px solid #8e9aa8;border-radius:2px"></div>
<div class="t" style="left:6px;top:618px;width:48px;height:14px;line-height:14px;text-align:center;font-size:8.5px;color:#222">Autoscale</div>
<div class="r" style="left:71px;top:626px;width:5px;height:4px;border-radius:2px;background:#777"></div>
<div class="t" style="left:81px;top:622.4px;font-size:8.5px;color:#222;">Position:</div>
<div class="t" style="left:116px;top:622.4px;font-size:8.5px;color:#333;font-style:italic">-1.00 Symbol</div>
<div class="t" style="left:8px;top:633.0px;font-size:7.5px;color:#333;">RMS:</div>
<div class="t" style="left:38px;top:633.0px;font-size:7.5px;color:#333;">0.847 %</div>
<div class="t" style="left:89px;top:633.0px;font-size:7.5px;color:#333;">Peak:</div>
<div class="t" style="left:118px;top:633.0px;font-size:7.5px;color:#333;">2.192 %</div>
<div class="t" style="left:170px;top:633.0px;font-size:7.5px;color:#333;">@</div>
<div class="t" style="left:183px;top:633.0px;font-size:7.5px;color:#333;">11.00 Symbol</div>
<div class="r" style="left:533px;top:626px;width:5px;height:4px;border-radius:2px;background:#777"></div>
<div class="t" style="left:543px;top:622.4px;font-size:8.5px;color:#222;">Scale:</div>
<div class="t" style="left:572px;top:622.4px;font-size:8.5px;color:#333;font-style:italic">128.00 Symbol</div>
<div class="r" style="left:662px;top:74px;width:613px;height:20px;background:#ffff00"></div>
<div class="t" style="left:670px;top:78.9px;font-size:8.5px;color:#333;">Data from warm-up period ... More&gt;&gt;</div>
<div class="t" style="left:712px;top:96.2px;font-size:8px;color:#222;">RMS</div>
<div class="t" style="left:774px;top:96.2px;font-size:8px;color:#222;">Peak</div>
<div class="t" style="left:837px;top:96.2px;font-size:8px;color:#222;">Location</div>
<div class="r" style="left:647px;top:107px;width:238px;height:1px;background:#d4d4d4"></div>
<div class="t" style="right:575px;top:110.2px;font-size:8px;color:#333;">EVM:</div>
<div class="t" style="left:713px;top:110.2px;font-size:8px;color:#333;">0.847 %</div>
<div class="t" style="left:776px;top:110.2px;font-size:8px;color:#333;">2.132 %</div>
<div class="t" style="left:838px;top:110.2px;font-size:8px;color:#333;">11.00</div>
<div class="t" style="left:713px;top:123.2px;font-size:8px;color:#333;">-41.445 dB</div>
<div class="t" style="left:776px;top:123.2px;font-size:8px;color:#333;">-33.423 dB</div>
<div class="t" style="right:575px;top:136.9px;font-size:8px;color:#333;">Phase Error:</div>
<div class="t" style="left:713px;top:136.9px;font-size:8px;color:#333;">0.458 °</div>
<div class="t" style="left:776px;top:136.9px;font-size:8px;color:#333;">1.221 °</div>
<div class="t" style="left:838px;top:136.9px;font-size:8px;color:#333;">11.00</div>
<div class="t" style="right:575px;top:149.9px;font-size:8px;color:#333;">Mag Error:</div>
<div class="t" style="left:713px;top:149.9px;font-size:8px;color:#333;">0.299 %</div>
<div class="t" style="left:776px;top:149.9px;font-size:8px;color:#333;">0.913 %</div>
<div class="t" style="left:838px;top:149.9px;font-size:8px;color:#333;">34.00</div>
<div class="r" style="left:647px;top:164px;width:238px;height:1px;background:#d4d4d4"></div>
<div class="t" style="right:575px;top:169.2px;font-size:8px;color:#333;">MER (RMS):</div>
<div class="t" style="left:713px;top:169.2px;font-size:8px;color:#333;">41.445 dB</div>
<div class="t" style="right:448px;top:169.2px;font-size:8px;color:#333;">Rho:</div>
<div class="t" style="left:838px;top:169.2px;font-size:8px;color:#333;">0.999928</div>
<div class="t" style="right:575px;top:182.4px;font-size:8px;color:#333;">IQ Origin Offset:</div>
<div class="t" style="left:713px;top:182.4px;font-size:8px;color:#333;">-68.850 dB</div>
<div class="t" style="right:448px;top:182.4px;font-size:8px;color:#333;">Frequency Error:</div>
<div class="t" style="left:838px;top:182.4px;font-size:8px;color:#333;">116.6 Hz</div>
<div class="t" style="right:575px;top:195.2px;font-size:8px;color:#333;">Gain Imbalance:</div>
<div class="t" style="left:713px;top:195.2px;font-size:8px;color:#333;">-0.005 dB</div>
<div class="t" style="right:448px;top:195.2px;font-size:8px;color:#333;">Quadrature Error:</div>
<div class="t" style="left:838px;top:195.2px;font-size:8px;color:#333;">0.111 °</div>
<div class="t" style="left:672px;top:275.2px;font-size:8px;color:#555;">&#9662;</div>
<div class="t" style="left:680px;top:275.9px;font-size:8.5px;color:#222;">Trace1</div>
<div class="r" style="left:726px;top:276px;width:9px;height:9px;background:#fff;border:1px solid #6a9cc8"></div>
<div class="t" style="left:727px;top:275.2px;font-size:8px;color:#2a6aa8;">&#10003;</div>
<div class="t" style="left:738px;top:275.4px;font-size:8.5px;color:#444;">Show</div>
<div class="t" style="left:768px;top:275.9px;font-size:8.5px;color:#222;">Vectors</div>
<div class="t" style="left:650px;top:344.5px;font-size:8.3px;color:#333;">Freq Error: 116.6 Hz, Auto</div>
<div class="r" style="left:645px;top:433px;width:632px;height:1px;background:#e0e0e0"></div>
<div class="t" style="left:647px;top:435.8px;font-size:7px;color:#333;">RMS:</div>
<div class="t" style="left:671px;top:435.8px;font-size:7px;color:#333;">0.847 %</div>
<div class="t" style="left:722px;top:435.8px;font-size:7px;color:#333;">Peak EVM:</div>
<div class="t" style="left:768px;top:435.8px;font-size:7px;color:#333;">2.192 %</div>
<div class="t" style="left:814px;top:435.8px;font-size:7px;color:#333;">@</div>
<div class="t" style="left:826px;top:435.8px;font-size:7px;color:#333;">11.00 Symbol</div>
<div class="t" style="left:1137px;top:413.0px;font-size:7.5px;color:#e8e86a;">Data from warm-up period ... More&gt;&gt;</div>
<div class="t" style="left:705px;top:471.2px;font-size:8px;color:#777;">&#9662;</div>
<div class="t" style="left:715px;top:471.9px;font-size:8.5px;color:#222;">Trace 1</div>
<div class="r" style="left:775px;top:472px;width:9px;height:9px;background:#fff;border:1px solid #6a9cc8"></div>
<div class="t" style="left:776px;top:471.2px;font-size:8px;color:#2a6aa8;">&#10003;</div>
<div class="t" style="left:787px;top:471.4px;font-size:8.5px;color:#444;">Show</div>
<div class="t" style="left:814px;top:471.9px;font-size:8.5px;color:#333;">+Peak Normal</div>
<div class="r" style="left:1247px;top:471px;width:25px;height:12px;background:linear-gradient(#f4f6f8,#dde3ea);border:1px solid #8e9aa8;border-radius:2px"></div>
<div class="t" style="left:1247px;top:471px;width:25px;height:12px;line-height:12px;text-align:center;font-size:8.5px;color:#222">Clear</div>
<div class="r" style="left:645px;top:488px;width:5px;height:4px;border-radius:2px;background:#777"></div>
<div class="t" style="left:654px;top:484.9px;font-size:8.5px;color:#222;">-1.87</div>
<div class="r" style="left:652px;top:500px;width:47px;height:13px;background:#fff;border:1px solid #b9c3cc;"></div>
<div class="t" style="left:656px;top:501.1px;font-size:9px;color:#222;">dBm</div>
<div class="r" style="left:687px;top:501px;width:11px;height:11px;background:#e6eef7;border:1px solid #7aa2c8"></div>
<div class="r" style="left:644px;top:535px;width:5px;height:4px;border-radius:2px;background:#777"></div>
<div class="t" style="left:651px;top:527.9px;font-size:8.5px;color:#222;">dB/div:</div>
<div class="t" style="left:654px;top:537.9px;font-size:8.5px;color:#222;">10.0 dB</div>
<div class="r" style="left:644px;top:562px;width:5px;height:4px;border-radius:2px;background:#777"></div>
<div class="t" style="left:652px;top:553.9px;font-size:8.5px;color:#222;">RBW:</div>
<div class="t" style="left:654px;top:564.9px;font-size:8.5px;color:#333;font-style:italic">300 kHz</div>
<div class="r" style="left:647px;top:580px;width:9px;height:9px;background:#fff;border:1px solid #8a8a8a"></div>
<div class="t" style="left:658px;top:577.9px;font-size:8.5px;color:#222;">VBW:</div>
<div class="t" style="right:556px;top:482.1px;font-size:8.5px;color:#333;">-1.9</div>
<div class="r" style="left:729px;top:485px;width:3px;height:1px;background:#999"></div>
<div class="t" style="right:556px;top:496.0px;font-size:8.5px;color:#333;">-11.9</div>
<div class="r" style="left:729px;top:498px;width:3px;height:1px;background:#999"></div>
<div class="t" style="right:556px;top:509.9px;font-size:8.5px;color:#333;">-21.9</div>
<div class="r" style="left:729px;top:512px;width:3px;height:1px;background:#999"></div>
<div class="t" style="right:556px;top:523.8px;font-size:8.5px;color:#333;">-31.9</div>
<div class="r" style="left:729px;top:526px;width:3px;height:1px;background:#999"></div>
<div class="t" style="right:556px;top:537.7px;font-size:8.5px;color:#333;">-41.9</div>
<div class="r" style="left:729px;top:540px;width:3px;height:1px;background:#999"></div>
<div class="t" style="right:556px;top:551.6px;font-size:8.5px;color:#333;">-51.9</div>
<div class="r" style="left:729px;top:554px;width:3px;height:1px;background:#999"></div>
<div class="t" style="right:556px;top:565.5px;font-size:8.5px;color:#333;">-61.9</div>
<div class="r" style="left:729px;top:568px;width:3px;height:1px;background:#999"></div>
<div class="t" style="right:556px;top:579.4px;font-size:8.5px;color:#333;">-71.9</div>
<div class="r" style="left:729px;top:582px;width:3px;height:1px;background:#999"></div>
<div class="t" style="right:556px;top:593.3px;font-size:8.5px;color:#333;">-81.9</div>
<div class="r" style="left:729px;top:596px;width:3px;height:1px;background:#999"></div>
<div class="t" style="right:556px;top:607.2px;font-size:8.5px;color:#333;">-91.9</div>
<div class="r" style="left:729px;top:610px;width:3px;height:1px;background:#999"></div>
<div class="t" style="right:556px;top:621.1px;font-size:8.5px;color:#333;">-101.9</div>
<div class="r" style="left:729px;top:624px;width:3px;height:1px;background:#999"></div>
<div class="t" style="left:742px;top:609.5px;font-size:7.5px;color:#e0e070;background:#000">Data from warm-up period ... More&gt;&gt;</div>
<div class="r" style="left:646px;top:630px;width:47px;height:13px;background:linear-gradient(#f4f6f8,#dde3ea);border:1px solid #8e9aa8;border-radius:2px"></div>
<div class="t" style="left:646px;top:630px;width:47px;height:13px;line-height:13px;text-align:center;font-size:8.5px;color:#222">Autoscale</div>
<div class="r" style="left:737px;top:633px;width:5px;height:4px;border-radius:2px;background:#777"></div>
<div class="t" style="left:746px;top:629.9px;font-size:8.5px;color:#222;">Start</div>
<div class="t" style="left:771px;top:629.9px;font-size:8.5px;color:#222;">980.0 MHz</div>
<div class="r" style="left:1161px;top:633px;width:5px;height:4px;border-radius:2px;background:#777"></div>
<div class="t" style="left:1171px;top:629.9px;font-size:8.5px;color:#222;">Stop</div>
<div class="t" style="left:1194px;top:629.9px;font-size:8.5px;color:#222;">1.020 GHz</div>
<div class="t" style="left:2px;top:655.1px;font-size:9.8px;color:#222;">Spectrum</div>
<div class="t" style="left:77px;top:655.1px;font-size:9.8px;color:#222;">Frequency</div>
<div class="r" style="left:126px;top:652px;width:62px;height:16px;background:#fff;border:1px solid #b9c3cc;"></div>
<div class="t" style="left:129px;top:655.1px;font-size:9.8px;color:#222;">1.00000 GHz</div>
<div class="t" style="left:410px;top:655.1px;font-size:9.8px;color:#222;">Ref Lev</div>
<div class="r" style="left:447px;top:652px;width:63px;height:16px;background:#fff;border:1px solid #b9c3cc;"></div>
<div class="t" style="left:450px;top:655.1px;font-size:9.8px;color:#222;">0.00 dBm</div>
<div class="t" style="left:742px;top:655.1px;font-size:9.8px;color:#222;">Span</div>
<div class="r" style="left:768px;top:652px;width:63px;height:16px;background:#fff;border:1px solid #b9c3cc;"></div>
<div class="t" style="left:772px;top:655.1px;font-size:9.8px;color:#222;">40.00 MHz</div>
<div class="t" style="left:1051px;top:655.1px;font-size:9.8px;color:#222;">Res BW</div>
<div class="r" style="left:1090px;top:652px;width:63px;height:16px;background:#fff;border:1px solid #b9c3cc;"></div>
<div class="t" style="left:1094px;top:655.1px;font-size:9.8px;color:#222;font-style:italic">300 kHz</div>
<div class="r" style="left:1177px;top:652px;width:39px;height:16px;background:linear-gradient(#f4f6f8,#dde3ea);border:1px solid #8e9aa8;border-radius:2px"></div>
<div class="t" style="left:1177px;top:652px;width:39px;height:16px;line-height:16px;text-align:center;font-size:9.6px;color:#222">Markers</div>
<div class="r" style="left:1220px;top:652px;width:35px;height:16px;background:linear-gradient(#f4f6f8,#dde3ea);border:1px solid #8e9aa8;border-radius:2px"></div>
<div class="t" style="left:1220px;top:652px;width:35px;height:16px;line-height:16px;text-align:center;font-size:9.6px;color:#222">Traces</div>
<div class="r" style="left:1257px;top:652px;width:17px;height:17px;background:#f0f3f6;border:1px solid #8e9aa8"></div>
<svg style="left:1257px;top:652px" width="17" height="17"><circle cx="8.5" cy="8.5" r="5.2" fill="#111"/><rect x="7" y="1.5" width="3" height="3.5" fill="#111" transform="rotate(0 8.5 8.5)"/><rect x="7" y="1.5" width="3" height="3.5" fill="#111" transform="rotate(45 8.5 8.5)"/><rect x="7" y="1.5" width="3" height="3.5" fill="#111" transform="rotate(90 8.5 8.5)"/><rect x="7" y="1.5" width="3" height="3.5" fill="#111" transform="rotate(135 8.5 8.5)"/><rect x="7" y="1.5" width="3" height="3.5" fill="#111" transform="rotate(180 8.5 8.5)"/><rect x="7" y="1.5" width="3" height="3.5" fill="#111" transform="rotate(225 8.5 8.5)"/><rect x="7" y="1.5" width="3" height="3.5" fill="#111" transform="rotate(270 8.5 8.5)"/><rect x="7" y="1.5" width="3" height="3.5" fill="#111" transform="rotate(315 8.5 8.5)"/><circle cx="8.5" cy="8.5" r="2.2" fill="#f0f3f6"/></svg>
<svg style="left:1203px;top:675px" width="77" height="16"><path d="M3 12a6 6 0 0 1 9-9" stroke="#c8b820" stroke-width="3" fill="none"/><path d="M5 10l5-5M7 8l5 5" stroke="#333" stroke-width="1.3"/><rect x="32" y="3" width="5" height="10" rx="1" fill="#8aa870" stroke="#555" stroke-width="1"/><rect x="33.5" y="1.5" width="2" height="2" fill="#555"/><path d="M56 13c0-6 4-10 9-10-1 6-4 10-9 10z" fill="#4a9a3a"/></svg>
<div class="r" style="left:65px;top:673px;width:1px;height:20px;background:#c3c9d0"></div>
<div class="r" style="left:252px;top:673px;width:1px;height:20px;background:#c3c9d0"></div>
<div class="r" style="left:295px;top:673px;width:1px;height:20px;background:#c3c9d0"></div>
<div class="r" style="left:366px;top:673px;width:1px;height:20px;background:#c3c9d0"></div>
<div class="r" style="left:412px;top:673px;width:1px;height:20px;background:#c3c9d0"></div>
<div class="r" style="left:466px;top:673px;width:1px;height:20px;background:#c3c9d0"></div>
<div class="r" style="left:519px;top:673px;width:1px;height:20px;background:#c3c9d0"></div>
<div class="r" style="left:555px;top:673px;width:1px;height:20px;background:#c3c9d0"></div>
<div class="t" style="left:5px;top:677.7px;font-size:8px;color:#1a1a1a;">Analyzing</div>
<div class="t" style="left:69px;top:677.7px;font-size:8px;color:#1a1a1a;">Warm-up period</div>
<div class="t" style="left:256px;top:677.7px;font-size:8px;color:#1a1a1a;">Real Time</div>
<div class="t" style="left:300px;top:677.7px;font-size:8px;color:#1a1a1a;">Free Run</div>
<div class="t" style="left:370px;top:677.7px;font-size:8px;color:#1a1a1a;">Ref: Int</div>
<div class="t" style="left:417px;top:677.7px;font-size:8px;color:#1a1a1a;">Atten: 20 dB</div>
<div class="t" style="left:470px;top:677.7px;font-size:8px;color:#1a1a1a;">Preamp: Off</div>
<div class="t" style="left:523px;top:677.7px;font-size:8px;color:#1a1a1a;">TG: Off</div>
<svg style="left:52px;top:90px" width="11" height="11"><path d="M2.5 4l3 3 3-3" stroke="#3d7ab8" stroke-width="1.2" fill="none"/></svg>
<svg style="left:687px;top:501px" width="11" height="11"><path d="M2.5 4l3 3 3-3" stroke="#3d7ab8" stroke-width="1.2" fill="none"/></svg>
<svg style="left:1012px;top:276px" width="12" height="18"><path d="M1 1v13l3-3 2.5 5 2-1-2.5-5h4.5z" fill="#fff" stroke="#333" stroke-width="1"/></svg>
<svg style="left:996px;top:614px" width="9" height="10"><path d="M1 2l3.5 6 3.5-6M4.5 8V0" stroke="#bbb" stroke-width="1" fill="none"/></svg></body></html>
